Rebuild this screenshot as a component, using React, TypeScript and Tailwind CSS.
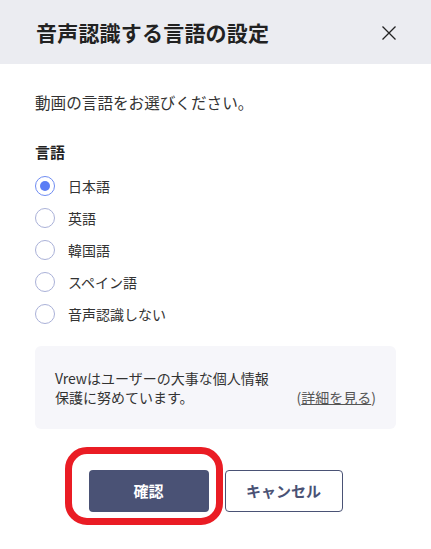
import React, { useState } from "react";

const font = { fontFamily: '"Noto Sans CJK JP", "Noto Sans", sans-serif' };

const options = ["日本語", "英語", "韓国語", "スペイン語", "音声認識しない"];

export default function App() {
  const [selected, setSelected] = useState(0);
  return (
    <div className="relative w-[431px] h-[549px] bg-white overflow-hidden" style={font}>
      <div className="h-[64px] bg-[#ebecf1] flex items-center justify-between pl-[36px] pr-[34px]">
        <h1 className="text-[21px] font-bold text-[#222] leading-none tracking-[0.2px]">音声認識する言語の設定</h1>
        <svg width="16" height="16" viewBox="0 0 16 16" className="mt-[1px]">
          <path d="M1.5 1.5 L14.5 14.5 M14.5 1.5 L1.5 14.5" stroke="#222" strokeWidth="1.3" fill="none" />
        </svg>
      </div>
      <div className="px-[35px]">
        <p className="mt-[28px] text-[15.6px] leading-[20px] text-[#333]">動画の言語をお選びください。</p>
        <p className="mt-[30px] text-[15px] leading-[20px] font-bold text-[#222]">言語</p>
        <div className="mt-[8px] flex flex-col">
          {options.map((o, i) => (
            <button
              key={o}
              onClick={() => setSelected(i)}
              className="h-[32px] flex items-center gap-[13px] text-left"
            >
              <span
                className={
                  "w-[20px] h-[20px] rounded-full border flex items-center justify-center " +
                  (i === selected ? "border-[#6f8cf2]" : "border-[#aab1d8]")
                }
              >
                {i === selected && <span className="w-[10px] h-[10px] rounded-full bg-[#5b7df5]" />}
              </span>
              <span className="text-[14px] text-[#333] leading-[20px]">{o}</span>
            </button>
          ))}
        </div>
        <div className="mt-[16px] h-[83px] rounded-[6px] bg-[#f6f6fa] pl-[20px] pr-[20px] pt-[23px] text-[14px] leading-[19px] text-[#333]">
          <p>Vrewはユーザーの大事な個人情報</p>
          <div className="flex justify-between">
            <p>保護に努めています。</p>
            <p className="text-[#555]">
              (<span className="underline">詳細を見る</span>)
            </p>
          </div>
        </div>
      </div>
      <div className="mt-[41px] flex justify-center gap-[16px]">
        <button className="w-[120px] h-[42px] rounded-[4px] bg-[#4a5275] text-white text-[15px] font-bold">確認</button>
        <button className="w-[118px] h-[42px] rounded-[4px] border border-[#4a5275] bg-white text-[#4a5275] text-[15px] font-bold">キャンセル</button>
      </div>
      <div className="absolute left-[65px] top-[447px] w-[158px] h-[78px] rounded-[22px] border-[7px] border-[#ea1c24] pointer-events-none" />
    </div>
  );
}
